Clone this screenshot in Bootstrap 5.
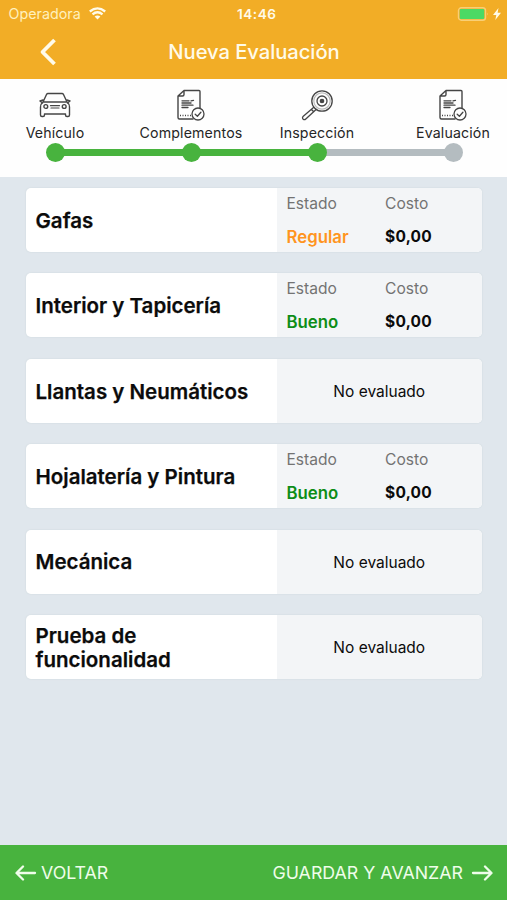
<!DOCTYPE html>
<html lang="es">
<head>
<meta charset="utf-8">
<meta name="viewport" content="width=device-width, initial-scale=1">
<title>Nueva Evaluación</title>
<link href="https://cdn.jsdelivr.net/npm/bootstrap@5.3.0/dist/css/bootstrap.min.css" rel="stylesheet">
<style>
  body { font-family: Inter, "Liberation Sans", sans-serif; background: #e0e7ed; color: #0b0b0b; white-space: nowrap; }
  svg { display: block; flex: none; fill: none; stroke: currentColor; stroke-linecap: round; stroke-linejoin: round; }
  .butt { stroke-linecap: butt; }
  .topbar { background: #f2ad26; color: #fffbea; height: 79px; }
  .status-row { height: 27px; padding: 0 6px 0 8.5px; font-size: 13px; }
  .status-row > div { flex: 1 1 0; }
  .carrier { font-size: 14.3px; color: #fff0bd; }
  .carrier svg { margin-top: -1px; }
  .clock { font-size: 13.6px; font-weight: 600; letter-spacing: .55px; margin-left: 4px; padding-top: 1px; }
  .title-row { height: 50px; display: grid; grid-template-columns: 57px 1fr 57px; align-items: center; }
  .title-text { font-size: 20.2px; font-weight: 500; letter-spacing: -.05px; text-align: center; padding: 1px 0 0 1px; }
  .steps { height: 98px; padding: 10px 0 0 3px; display: grid; grid-template-columns: 136px 126px 136px 104px; background: #fefefe; }
  .step { width: 104px; position: relative; color: #454545; }
  .step-label { font-size: 14.2px; line-height: 18px; margin-top: 3px; letter-spacing: .14px; color: #262626; }
  .dot { width: 19px; height: 19px; border-radius: 50%; background: #48b33e; margin-top: 1px; position: relative; z-index: 1; }
  .step.todo .dot { background: #b4bcc0; }
  .rail { position: absolute; left: 52px; top: 59.500px; height: 7px; background: #48b33e; }
  .w-a { width: 136px; } .w-b { width: 126px; }
  .rail.pending { background: #b4bcc0; }
  .items { padding: 11px 25.500px 0 26px; gap: 21.9px; }
  .item { height: 63.600px; border-radius: 5px; overflow: hidden; background: #fff; box-shadow: 0 0 1px 1px #dae2e7; }
  .item-name { width: 251px; padding: 1.500px 0 0 9.5px; font-size: 20.5px; font-weight: 630; line-height: 24px; }
  .item-name span { -webkit-text-stroke: .25px currentColor; }
  .item-info { background: #f3f5f7; font-size: 15.5px; }
  .item-info.justify-content-center { padding-top: 1px; }
  .pair { padding: 5px 0 0 9.5px; display: grid; grid-template-columns: 98.5px 1fr; grid-auto-rows: 22px 22px; row-gap: 10.500px; line-height: 22px; }
  .cap { color: #737373; font-size: 15.6px; }
  .state { font-size: 16.8px; font-weight: 600; }
  .regular { color: #ff9420; } .bueno { color: #0d8d16; }
  .cost { font-size: 15.5px; font-weight: 700; letter-spacing: .25px; }
  .bottom { background: #48b33e; color: #effdea; height: 55px; padding: 1px 14px 0 15px; font-size: 17.8px; }
</style>
<script src="https://cdn.jsdelivr.net/npm/bootstrap@5.3.0/dist/js/bootstrap.bundle.min.js"></script>
</head>
<body>
<svg width="0" height="0" class="position-absolute">
  <symbol id="doc" viewBox="0 0 30 32">
    <path d="M8 1.500H23Q24 1.500 24 2.500V20.500M17 30H3.500Q2 30 2 28.500V7L8 1.500V5.500Q8 7 6.500 7H2.500" stroke-width="1.400"/>
    <path d="M6 11.800h7M15 11.800l2.500-.5M6 14h9M6 16.200h11M6 18.500h6" stroke-width="1.300"/>
    <path d="M4 26.500h11" stroke-width="1.300" stroke-dasharray="1 1.500" stroke-linecap="butt"/>
    <circle cx="22" cy="25" r="6" stroke-width="1.300" fill="#fefefe"/>
    <path d="M19.200 25.200l2.200 2 3.500-4" stroke-width="1.300"/>
  </symbol>
</svg>
<div class="vh-100 d-flex flex-column overflow-hidden">
  <header class="topbar">
    <div class="status-row d-flex align-items-center">
      <div class="carrier d-flex align-items-center gap-2"><span>Operadora</span>
        <svg class="butt" width="17" height="13" viewBox="0 0 17 13" stroke-width="2.300"><path d="M.8 4.500Q8.500-1.800 16.200 4.500M3.500 7.400Q8.500 3.200 13.500 7.400" stroke="#fffbea"/><path d="M5.600 9.500Q8.500 7.300 11.400 9.500L8.500 12.500Z" fill="#fffbea" stroke="none"/></svg>
      </div>
      <span class="clock">14:46</span>
      <div class="d-flex align-items-center justify-content-end gap-1">
        <svg width="32" height="14" viewBox="0 0 32 14"><rect x="1.500" y=".8" width="27" height="12.400" rx="2.800" stroke="#f9cf76" stroke-width="1.400"/><rect x="2.800" y="2" width="24.400" height="10" rx="1" fill="#4cd964" stroke="none"/><path d="M30.300 5.500Q32 7 30.300 8.500Z" fill="#f9cf76" stroke="none"/></svg>
        <svg width="8" height="12" viewBox="0 0 8 12"><path d="M5.500 0L0 7H3.300L2.300 12L8 4.800H4.600Z" fill="#fffbea" stroke="none"/></svg>
      </div>
    </div>
    <div class="title-row">
      <svg class="ms-auto butt" width="18" height="28" viewBox="0 0 18 28" stroke-width="3.800"><path d="M15.500 2L3.500 14L15.500 26"/></svg>
      <div class="title-text">Nueva Evaluación</div>
    </div>
  </header>

  <section class="steps">
    <div class="step d-flex flex-column align-items-center">
      <svg width="34" height="32" viewBox="0 0 34 32" stroke-width="1.400"><path d="M5 13L8.500 5.500Q9 4.500 10 4.500H24Q25 4.500 25.500 5.500L29 13M5 13H29Q31.500 15 31.500 18V26Q31.500 27.500 30 27.500H29Q27.500 27.500 27.500 26V25H6.500V26Q6.500 27.500 5 27.500H4Q2.500 27.500 2.500 26V18Q2.500 15 5 13ZM5 11L2 12L4.500 14M29 11L32 12L29.500 14"/><circle cx="7.800" cy="17.500" r="1.900"/><circle cx="26.200" cy="17.500" r="1.900"/><path d="M12.500 16.700h9M13 19h8" stroke-width="1.200"/></svg>
      <div class="step-label">Vehículo</div><div class="dot"></div><div class="rail w-a"></div>
    </div>
    <div class="step d-flex flex-column align-items-center">
      <svg width="30" height="32"><use href="#doc"/></svg>
      <div class="step-label">Complementos</div><div class="dot"></div><div class="rail w-b"></div>
    </div>
    <div class="step d-flex flex-column align-items-center">
      <svg width="32" height="32" viewBox="0 0 32 32" stroke-width="1.300"><circle cx="21" cy="12" r="10.200"/><circle cx="21" cy="12" r="8.200" stroke="#bbb" stroke-width="1.200"/><circle cx="21" cy="12" r="5"/><circle cx="21" cy="12" r="1.700" fill="currentColor"/><path d="M12.500 18.500L2 27.500Q1 29 2.200 30.200Q3.500 31.200 4.800 30L14.800 20.700M10.500 20.500l2.200 2.200"/></svg>
      <div class="step-label">Inspección</div><div class="dot"></div><div class="rail pending w-a"></div>
    </div>
    <div class="step todo d-flex flex-column align-items-center">
      <svg width="30" height="32"><use href="#doc"/></svg>
      <div class="step-label">Evaluación</div><div class="dot"></div>
    </div>
  </section>

  <main class="items flex-grow-1 d-flex flex-column">
    <div class="item d-flex flex-shrink-0"><div class="item-name d-flex align-items-center"><span>Gafas</span></div>
      <div class="item-info pair flex-grow-1"><span class="cap">Estado</span><span class="cap">Costo</span><span class="state regular">Regular</span><span class="cost">$0,00</span></div></div>
    <div class="item d-flex flex-shrink-0"><div class="item-name d-flex align-items-center"><span>Interior y Tapicería</span></div>
      <div class="item-info pair flex-grow-1"><span class="cap">Estado</span><span class="cap">Costo</span><span class="state bueno">Bueno</span><span class="cost">$0,00</span></div></div>
    <div class="item d-flex flex-shrink-0"><div class="item-name d-flex align-items-center"><span>Llantas y Neumáticos</span></div>
      <div class="item-info flex-grow-1 d-flex align-items-center justify-content-center"><span>No evaluado</span></div></div>
    <div class="item d-flex flex-shrink-0"><div class="item-name d-flex align-items-center"><span>Hojalatería y Pintura</span></div>
      <div class="item-info pair flex-grow-1"><span class="cap">Estado</span><span class="cap">Costo</span><span class="state bueno">Bueno</span><span class="cost">$0,00</span></div></div>
    <div class="item d-flex flex-shrink-0"><div class="item-name d-flex align-items-center"><span>Mecánica</span></div>
      <div class="item-info flex-grow-1 d-flex align-items-center justify-content-center"><span>No evaluado</span></div></div>
    <div class="item d-flex flex-shrink-0"><div class="item-name d-flex align-items-center"><span>Prueba de<br>funcionalidad</span></div>
      <div class="item-info flex-grow-1 d-flex align-items-center justify-content-center"><span>No evaluado</span></div></div>
  </main>

  <footer class="bottom d-flex align-items-center justify-content-between">
    <div class="d-flex align-items-center"><svg class="me-1" width="22" height="16" viewBox="0 0 22 16" stroke-width="2.300"><path d="M20 8H2M8 1.500L1.500 8L8 14.500"/></svg><span>VOLTAR</span></div>
    <div class="d-flex align-items-center"><span>GUARDAR Y AVANZAR</span><svg class="ms-2" width="22" height="16" viewBox="0 0 22 16" stroke-width="2.300"><path d="M2 8H20M14 1.500L20.500 8L14 14.500"/></svg></div>
  </footer>
</div>
</body>
</html>
